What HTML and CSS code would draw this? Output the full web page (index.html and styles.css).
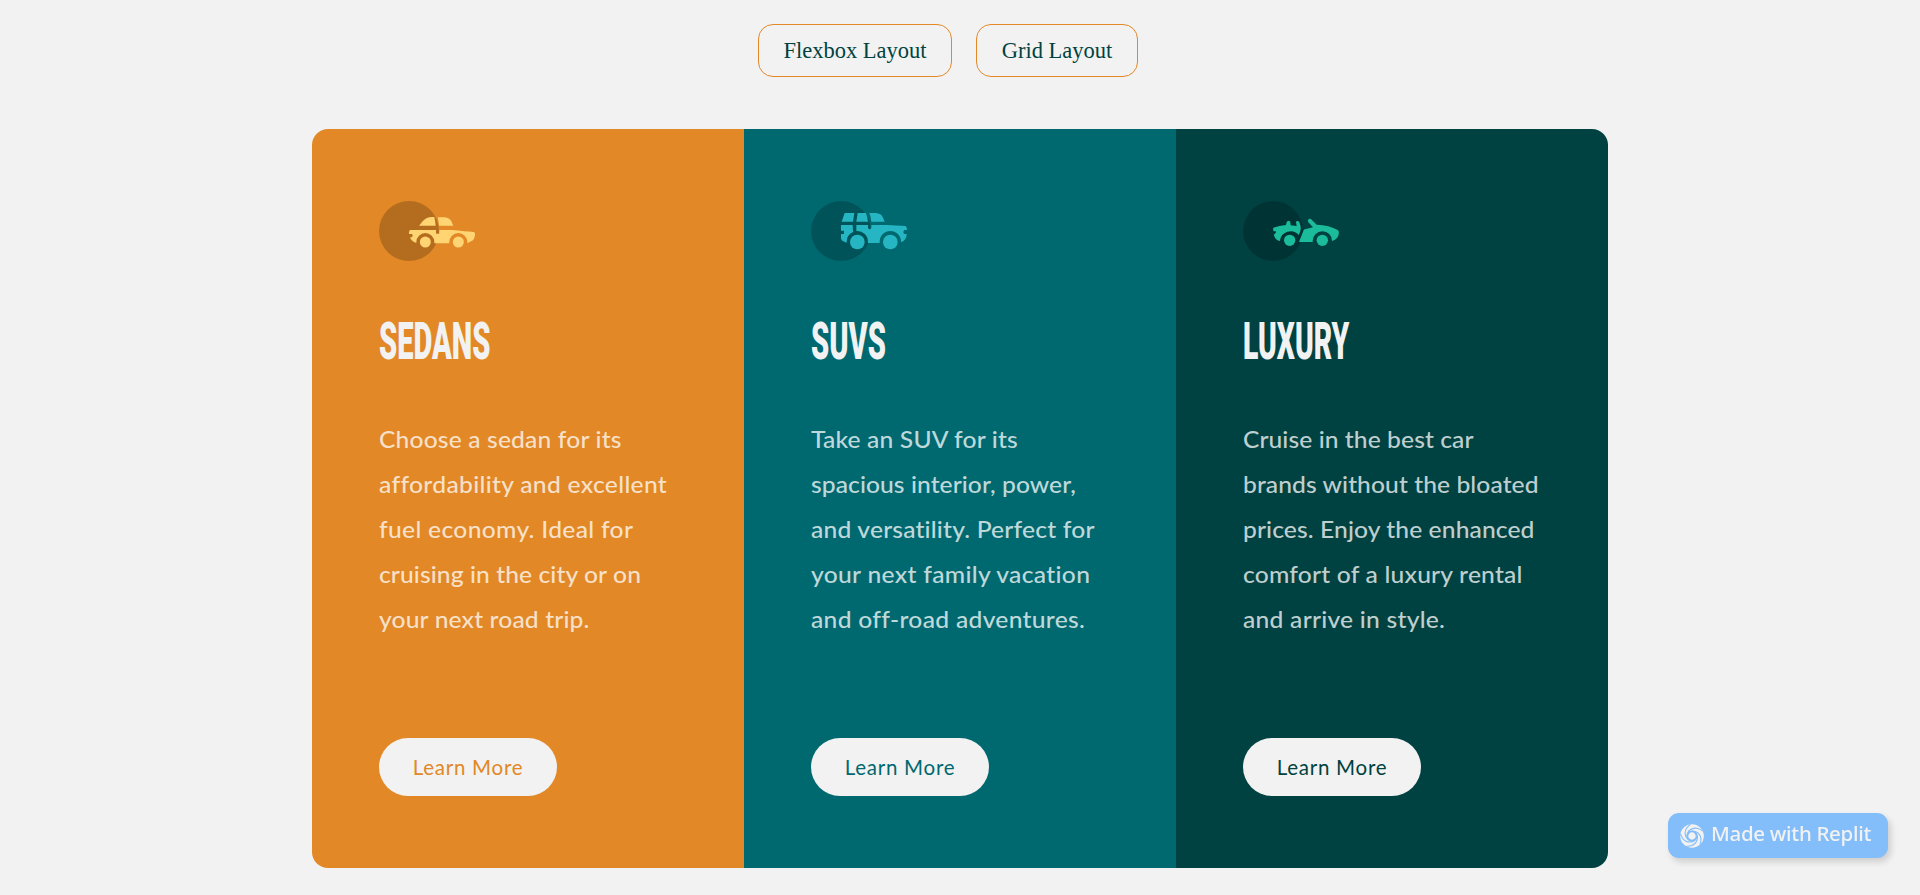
FILE: index.html
```html
<!DOCTYPE html>
<html lang="en">
<head>
<meta charset="utf-8">
<title>3-column preview card</title>
<link rel="stylesheet" href="styles.css">
</head>
<body>
<nav class="switcher">
  <a class="tab flexbox">Flexbox Layout</a>
  <a class="tab grid">Grid Layout</a>
</nav>
<main class="cards">
  <section class="card sedans">
    <svg class="icon" viewBox="27 33 288 180">
      <circle cx="117" cy="123" r="90" fill="#000" opacity=".2"/>
      <g fill="#FFD473">
        <path d="M147 107L158 94Q169 81 186 81H193Q196 94 197 107Z"/>
        <path d="M203 82H220Q238 82 244 94L250 107H207Q206 93 203 82Z"/>
        <path d="M120 120H198V129Q198 131.500 200 131.500H206Q208 131.500 208 129V120H246Q285 124 311 126Q316 127 315 134Q314 149 303 154L292 160V156A27 27 0 0 0 238 156V160H193V156A27 27 0 0 0 139 156V159Q124 153 120 143L126 141Q130 136 126 132H117Q116 124 120 120Z"/>
        <circle cx="166" cy="156" r="16.500"/>
        <circle cx="265" cy="156" r="16.500"/>
      </g>
    </svg>
    <h2 class="title"><span>SEDANS</span></h2>
    <p class="text">
      <span>Choose a sedan for its</span>
      <span>affordability and excellent</span>
      <span>fuel economy. Ideal for</span>
      <span>cruising in the city or on</span>
      <span>your next road trip.</span>
    </p>
    <a class="more">Learn More</a>
  </section>
  <section class="card suvs">
    <svg class="icon" viewBox="33 33 288 180">
      <circle cx="123" cy="123" r="90" fill="#000" opacity=".2"/>
      <g fill="#26B6C3">
        <path d="M134 69H163L159 95H125Z"/>
        <path d="M173 69H198Q202 81 204 95H169Z"/>
        <path d="M208 69H227Q244 70 249 83L254 95H214Q213 81 208 69Z"/>
        <path d="M123 105H158Q158 116 160 126A32 32 0 0 0 140 155V158Q123 154 123 144V132H132V122H123Z"/>
        <path d="M169 105H204V112Q204 118 209 118Q214 118 214 112V105H262L316 108Q321 110 321 120H313Q307 126 313 132H320Q320 150 303 157V155A32 32 0 0 0 239 155V159H204V155A32 32 0 0 0 169 123Z"/>
        <circle cx="172" cy="156" r="22"/>
        <circle cx="271" cy="156" r="22"/>
      </g>
    </svg>
    <h2 class="title"><span>SUVS</span></h2>
    <p class="text">
      <span>Take an SUV for its</span>
      <span>spacious interior, power,</span>
      <span>and versatility. Perfect for</span>
      <span>your next family vacation</span>
      <span>and off-road adventures.</span>
    </p>
    <a class="more">Learn More</a>
  </section>
  <section class="card luxury">
    <svg class="icon" viewBox="39 33 288 180">
      <circle cx="129" cy="123" r="90" fill="#000" opacity=".2"/>
      <g fill="#1BBC9B">
        <path d="M130 113Q148 107 168 105L170 96Q172 92 177 93Q182 94 181 98L182 106L200 108L198 97Q199 92 204 93Q208 94 209 100Q217 117 206 135A32 32 0 0 0 150 153Q137 151 133 139L131 134Q140 129 138 124H131Q128 119 130 113Z"/>
        <path d="M235 97Q232 90 237 87Q241 85 245 89L260 104Q298 105 323 120Q328 123 326 133Q323 149 306 153A29 29 0 0 0 248 152V156H207L221 121Q223 117 228 117L249 112Z"/>
        <circle cx="179" cy="151" r="17"/>
        <circle cx="277" cy="151" r="17"/>
      </g>
    </svg>
    <h2 class="title"><span>LUXURY</span></h2>
    <p class="text">
      <span>Cruise in the best car</span>
      <span>brands without the bloated</span>
      <span>prices. Enjoy the enhanced</span>
      <span>comfort of a luxury rental</span>
      <span>and arrive in style.</span>
    </p>
    <a class="more">Learn More</a>
  </section>
</main>
<a class="badge">
  <svg class="swirl" viewBox="-12 -12 24 24">
    <circle r="11.800" fill="#f2f2f2"/>
    <g fill="none" stroke="#83bdfa" stroke-width="1.100">
      <circle r="4.600" stroke-width="1.800"/>
      <path id="arm" d="M-4.800 0C-5 -5 0 -9 6 -7.500Q9 -6.500 10.500 -5"/>
      <use href="#arm" transform="rotate(72)"/>
      <use href="#arm" transform="rotate(144)"/>
      <use href="#arm" transform="rotate(216)"/>
      <use href="#arm" transform="rotate(288)"/>
    </g>
  </svg>
  <span class="made">Made with Replit</span>
</a>
</body>
</html>
```
FILE: styles.css
```css
* { box-sizing: border-box; }
body { margin: 0; height: 895px; overflow: hidden; background: #f2f2f2; }

.switcher { display: flex; justify-content: center; gap: 24px; padding: 24px 24px 0 0; height: 129px; }
.tab { height: 53px; border: 1px solid #e38826; border-radius: 15px; text-align: center; white-space: nowrap;
  font: 22.5px/51px "Liberation Serif", serif; color: #004241; }
.flexbox { width: 194px; }
.grid { width: 162px; }

.cards { display: grid; grid-template-columns: repeat(3, 432px); width: 1296px; height: 739px; margin: 0 auto;
  border-radius: 16px; overflow: hidden; }
.card { display: flex; flex-direction: column; align-items: flex-start; padding: 72px 67px; }
.sedans { background: #e28826; color: #e28826; }
.suvs { background: #006970; color: #006970; }
.luxury { background: #004241; color: #004241; }

.icon { width: 96px; height: 60px; flex: none; }
.title { margin: 51px 0 0; height: 60px; font: 900 51px/60px Roboto, sans-serif; color: #f2f2f2; white-space: nowrap; }
.title span { display: inline-block; transform-origin: 0 50%; transform: scaleX(.57); }
.luxury .title span { transform: scaleX(.555); }
.text { margin: 45px 0 0; font: 500 22.4px/45px Lato, sans-serif; color: rgba(255, 255, 255, .75); }
.text span { display: block; white-space: nowrap; transform-origin: 0 50%; transform: scaleX(1.1); }

.sedans .text span:nth-child(1) { letter-spacing: .138px; }
.sedans .text span:nth-child(2) { letter-spacing: .283px; }
.sedans .text span:nth-child(3) { letter-spacing: .277px; }
.sedans .text span:nth-child(4) { letter-spacing: .08px; }
.sedans .text span:nth-child(5) { letter-spacing: .13px; }
.suvs .text span:nth-child(1) { letter-spacing: .133px; }
.suvs .text span:nth-child(2) { letter-spacing: .058px; }
.suvs .text span:nth-child(3) { letter-spacing: .17px; }
.suvs .text span:nth-child(4) { letter-spacing: .28px; }
.suvs .text span:nth-child(5) { letter-spacing: .27px; }
.luxury .text span:nth-child(1) { letter-spacing: .068px; }
.luxury .text span:nth-child(2) { letter-spacing: .068px; }
.luxury .text span:nth-child(3) { letter-spacing: .09px; }
.luxury .text span:nth-child(4) { letter-spacing: .18px; }
.luxury .text span:nth-child(5) { letter-spacing: .22px; }

.more { width: 178px; height: 58px; margin-top: auto; border-radius: 29px; background: #f2f2f2;
  text-align: center; font: 20.5px/59px Lato, sans-serif; letter-spacing: .75px; }
.badge { position: fixed; right: 32px; bottom: 37px; width: 220px; height: 45px; display: flex; align-items: center;
  gap: 7px; padding-left: 12px; border-radius: 11px; background: #83bdfa; box-shadow: 3px 4px 6px rgba(0, 0, 0, .15);
  font: 500 20.5px/41px "Noto Sans", sans-serif; color: #f2f2f2; white-space: nowrap; }
.made { height: 45px; letter-spacing: -.3px; }
.swirl { width: 24px; height: 24px; flex: none; }
```
